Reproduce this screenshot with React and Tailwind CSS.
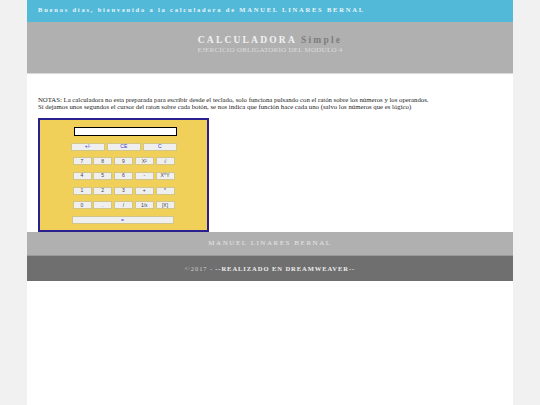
const rows = [
  ["7", "8", "9", "X²", "√"],
  ["4", "5", "6", "-", "X^Y"],
  ["1", "2", "3", "+", "*"],
  ["0", ".", "/", "1/x", "[X]"],
];

function CalcButton({ label, className }) {
  return (
    <div
      className={`flex h-[8px] items-center justify-center border border-[#d0c68c] bg-[#efefef] text-[5px] leading-none ${className}`}
    >
      {label}
    </div>
  );
}

export default function App() {
  return (
    <div className="min-h-[405px] bg-[#f1f1f1] font-['Liberation_Serif',serif]">
      <div className="mx-[27px] min-h-[405px] w-[486px] bg-white">
        <div className="flex h-[22px] items-center bg-[#52b9d8] pb-[3px] pl-[11px] text-[6.5px] font-bold tracking-[1.8px] text-[#e8f6fa]">
          Buenos días, bienvenido a la calculadora de MANUEL LINARES BERNAL
        </div>
        <div className="flex h-[52px] flex-col items-center border-b border-[#d9d9d9] bg-[#b0b0b0] pt-[12px]">
          <div className="text-[9.5px] leading-[12px] font-bold tracking-[2.2px] text-[#f2f2f2]">
            CALCULADORA <span className="text-[#7d7d7d]">Simple</span>
          </div>
          <div className="text-[7px] leading-[8px] tracking-[0.25px] text-[#dcdcdc]">
            EJERCICIO OBLIGATORIO DEL MODULO 4
          </div>
        </div>

        <div className="h-[158px] pt-[22px] pl-[11px]">
          <p className="whitespace-nowrap text-[6.75px] leading-[7px] text-[#222]">
            NOTAS: La calculadora no esta preparada para escribir desde el teclado, solo funciona pulsando con el ratón sobre los números y los operandos.
            <br />
            Si dejamos unos segundos el cursor del raton sobre cada botón, se nos indica que función hace cada uno (salvo los números que es lógico)
          </p>
          <div className="mt-[8px] h-[114px] w-[171px] border-2 border-[#2a1f8f] bg-[#f0d058] pt-[7px] pl-[31px] font-['Liberation_Sans',sans-serif] text-[#3a3ad0]">
            <div className="ml-[3px] h-[8.5px] w-[103px] border border-black bg-white"></div>
            <div className="mt-[7px] flex gap-[2.5px]">
              <CalcButton label="+/-" className="w-[33.5px]" />
              <CalcButton label="CE" className="w-[33.5px]" />
              <CalcButton label="C" className="w-[33.5px]" />
            </div>
            <div className="mt-[6.5px] flex flex-col gap-[6.75px] pl-[1.5px]">
              {rows.map((row) => (
                <div key={row[0]} className="flex gap-[1.75px]">
                  {row.map((label) => (
                    <CalcButton key={label} label={label} className="w-[19px] text-[#444]" />
                  ))}
                </div>
              ))}
              <CalcButton label="=" className="-ml-[1px] w-[102px]" />
            </div>
          </div>
        </div>

        <div className="flex h-[24px] items-center justify-center border-b border-[#999] bg-[#b0b0b0] text-[7px] tracking-[1.55px] text-[#e6e6e6]">
          MANUEL LINARES BERNAL
        </div>
        <div className="flex h-[25px] items-center justify-center bg-[#6f6f6f] text-[6.5px] tracking-[0.95px] text-[#d0d0d0]">
          ©2017 - <span className="ml-[2px] font-bold text-[#eeeeee]">--REALIZADO EN DREAMWEAVER--</span>
        </div>
      </div>
    </div>
  );
}
